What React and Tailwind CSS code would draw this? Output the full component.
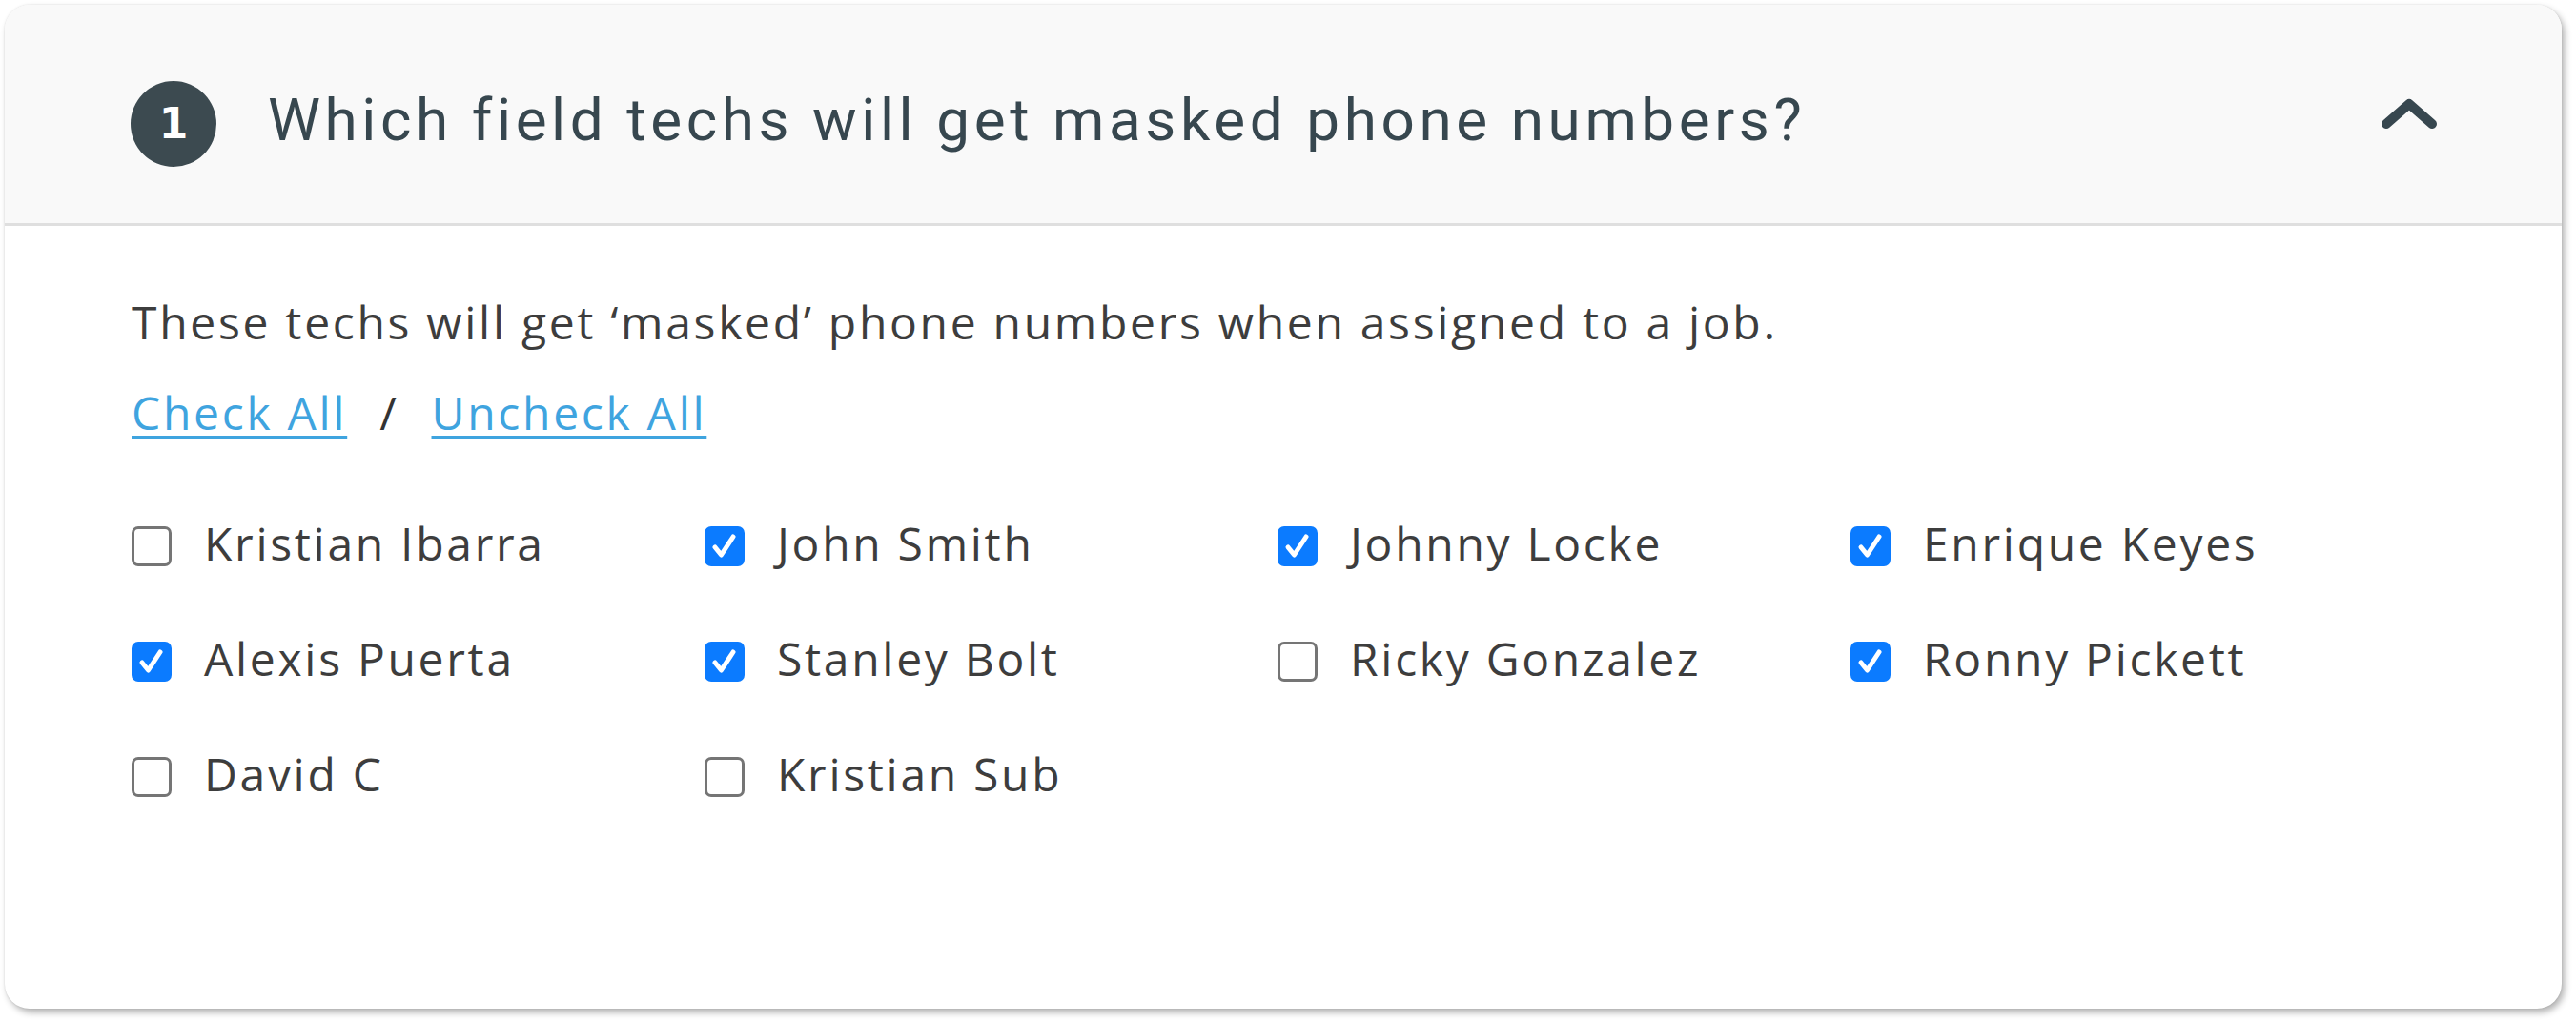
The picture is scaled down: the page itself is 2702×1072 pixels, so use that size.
import React from 'react';

const techs = [
  { name: 'Kristian Ibarra', checked: false },
  { name: 'John Smith', checked: true },
  { name: 'Johnny Locke', checked: true },
  { name: 'Enrique Keyes', checked: true },
  { name: 'Alexis Puerta', checked: true },
  { name: 'Stanley Bolt', checked: true },
  { name: 'Ricky Gonzalez', checked: false },
  { name: 'Ronny Pickett', checked: true },
  { name: 'David C', checked: false },
  { name: 'Kristian Sub', checked: false },
];

const bodyFont = { fontFamily: '"Open Sans", "Noto Sans", sans-serif' };

function Box({ checked }) {
  if (checked) {
    return (
      <span className="mt-[6px] flex h-[42px] w-[42px] shrink-0 items-center justify-center rounded-[7px] bg-[#0b7bff]">
        <svg width="42" height="42" viewBox="0 0 42 42">
          <path d="M11 22 L17.5 30 L30 11" fill="none" stroke="#fff" strokeWidth="5" strokeLinecap="round" strokeLinejoin="round" />
        </svg>
      </span>
    );
  }
  return <span className="mt-[6px] block h-[42px] w-[42px] shrink-0 rounded-[7px] border-[3px] border-[#757575] bg-white" />;
}

export default function App() {
  return (
    <div className="min-h-screen bg-white pl-[5px] pt-[5px]">
      <div className="h-[1053px] w-[2682px] overflow-hidden rounded-[26px] bg-white shadow-[3px_4px_7px_rgba(0,0,0,0.3),0_0_2px_rgba(0,0,0,0.12)]">
        <div className="flex h-[232px] items-start border-b-[3px] border-[#dfdfdf] bg-[#f9f9f9] pl-[132px] pr-[128px]">
          <div
            className="mt-[80px] flex h-[90px] w-[90px] shrink-0 items-center justify-center rounded-full bg-[#3c4a50] text-[44px] font-bold text-white"
            style={{ fontFamily: '"DejaVu Sans", sans-serif' }}
          >
            1
          </div>
          <div
            className="ml-[54px] mt-[90px] flex-1 text-[62px] font-normal leading-[62px] tracking-[4.6px] text-[#37474f]"
            style={{ fontFamily: 'Roboto, "Liberation Sans", sans-serif', fontVariantLigatures: 'none' }}
          >
            Which field techs will get masked phone numbers?
          </div>
          <svg className="mt-[95px] shrink-0" width="64" height="40" viewBox="0 0 64 40">
            <path d="M8 30 L32 9 L56 30" fill="none" stroke="#37474f" strokeWidth="10" strokeLinecap="round" strokeLinejoin="round" />
          </svg>
        </div>

        <div className="pl-[133px] pt-[77px] text-[48px] leading-[48px] tracking-[2.7px] text-[#3d3d3d]" style={bodyFont}>
          <p>These techs will get ‘masked’ phone numbers when assigned to a job.</p>
          <div className="mt-[47px] flex items-center">
            <a href="#" className="text-[#3fa4df] underline decoration-[3px] underline-offset-[6px]">Check All</a>
            <span className="mx-[34px] text-[#333]">/</span>
            <a href="#" className="text-[#3fa4df] underline decoration-[3px] underline-offset-[6px]">Uncheck All</a>
          </div>
          <div className="mt-[89px] grid grid-cols-[repeat(4,601px)] gap-y-[73px]">
            {techs.map((t) => (
              <label key={t.name} className="flex h-[48px] items-center gap-[34px]">
                <Box checked={t.checked} />
                <span>{t.name}</span>
              </label>
            ))}
          </div>
        </div>
      </div>
    </div>
  );
}
